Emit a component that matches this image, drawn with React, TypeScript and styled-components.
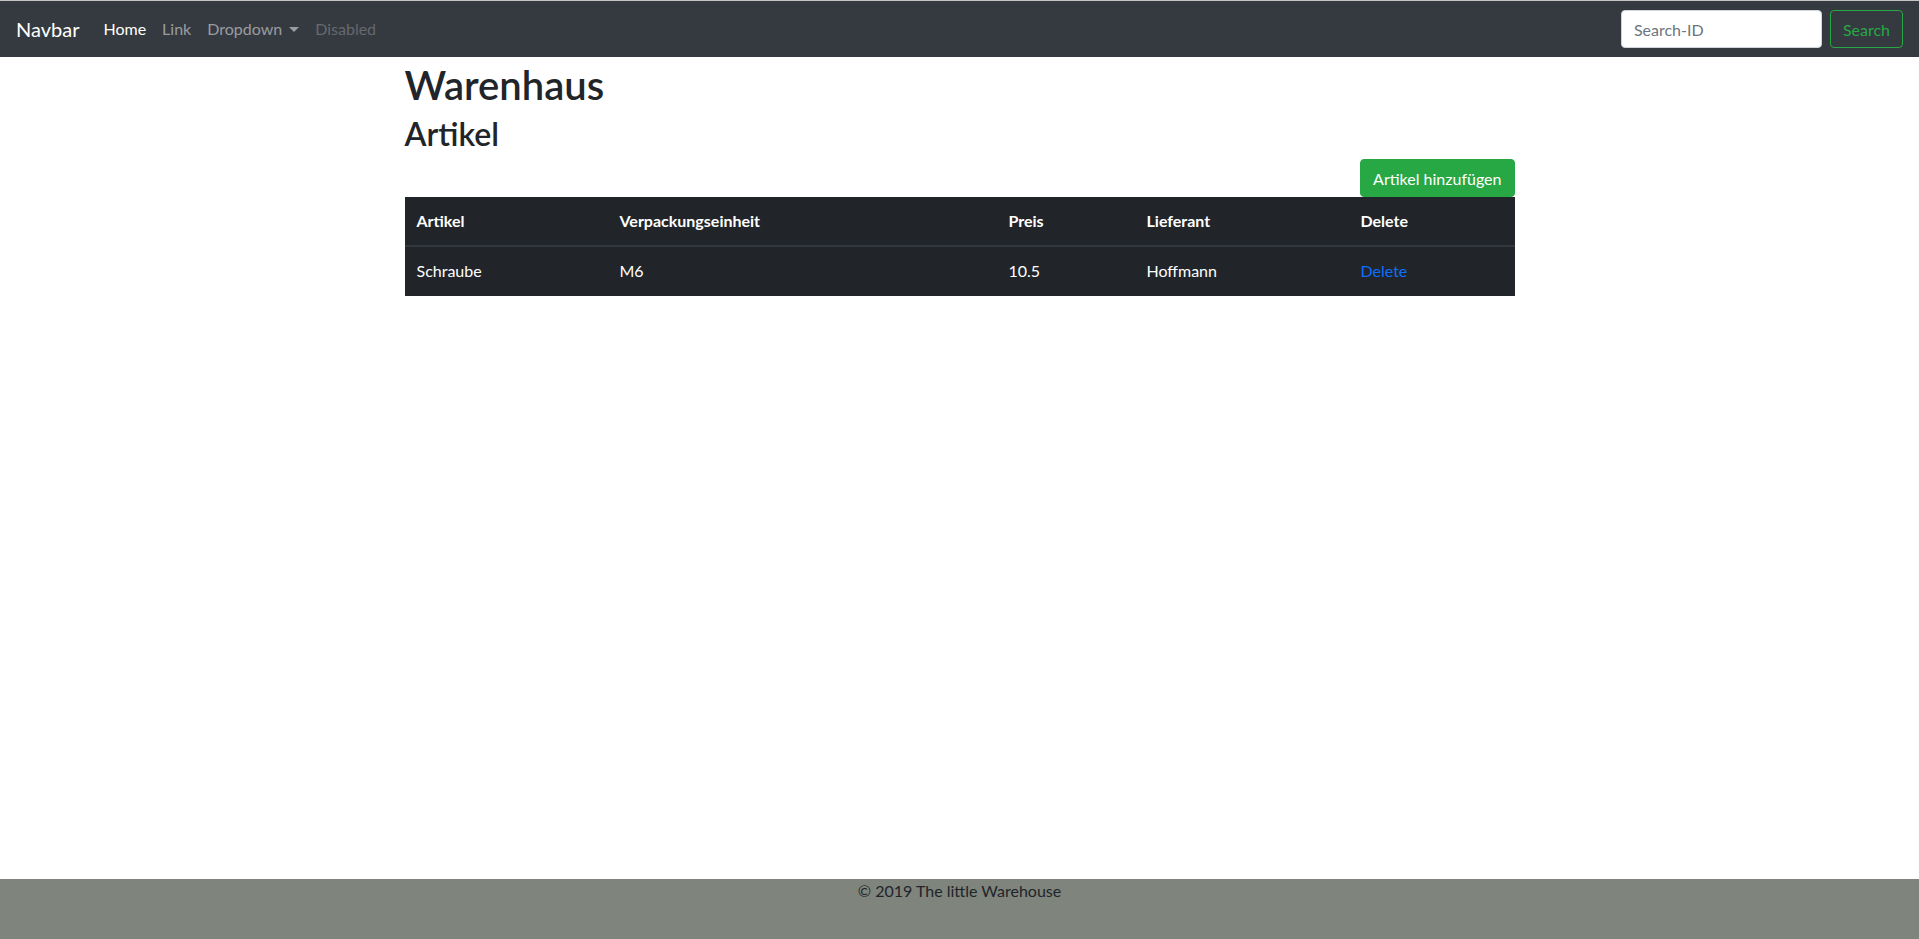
import React from "react";
import styled, { createGlobalStyle } from "styled-components";

const GlobalStyle = createGlobalStyle`
  *, *::before, *::after { box-sizing: border-box; }
  html, body { margin: 0; padding: 0; }
  body {
    font-family: "Lato", "Open Sans", "Noto Sans", sans-serif;
    font-size: 16px;
    line-height: 1.5;
    color: #212529;
    background: #fff;
  }
`;

const Page = styled.div`
  min-height: 100vh;
  display: flex;
  flex-direction: column;
  border-top: 1px solid #c4c4c4;
`;

const Navbar = styled.nav`
  height: 56px;
  background: #343a40;
  display: flex;
  align-items: center;
  padding: 8px 16px;
`;

const Brand = styled.a`
  font-size: 20px;
  line-height: 30px;
  color: #fff;
  margin-right: 16px;
  padding: 5px 0;
  text-decoration: none;
`;

const NavList = styled.ul`
  display: flex;
  list-style: none;
  margin: 0;
  padding: 0;
  flex: 1;
`;

const NavLink = styled.a<{ $tone: "active" | "normal" | "disabled" }>`
  display: flex;
  align-items: center;
  padding: 8px;
  color: ${(p) =>
    p.$tone === "active"
      ? "#fff"
      : p.$tone === "disabled"
      ? "rgba(255,255,255,0.25)"
      : "rgba(255,255,255,0.5)"};
  text-decoration: none;
`;

const Caret = styled.span`
  display: inline-block;
  margin-left: 7px;
  width: 0;
  height: 0;
  border-top: 5px solid rgba(255, 255, 255, 0.5);
  border-left: 5px solid transparent;
  border-right: 5px solid transparent;
  margin-top: 1px;
`;

const SearchForm = styled.form`
  display: flex;
  align-items: center;
  gap: 8px;
`;

const SearchInput = styled.input`
  width: 201px;
  height: 38px;
  padding: 6px 12px;
  font-family: inherit;
  font-size: 16px;
  color: #495057;
  border: 1px solid #ced4da;
  border-radius: 4px;
  background: #fff;
  &::placeholder { color: #6c757d; }
`;

const OutlineButton = styled.button`
  height: 38px;
  padding: 6px 12px;
  font-family: inherit;
  font-size: 16px;
  color: #28a745;
  background: transparent;
  border: 1px solid #28a745;
  border-radius: 4px;
`;

const Container = styled.main`
  width: 1140px;
  margin: 0 auto;
  padding: 0 15px;
`;

const H1 = styled.h1`
  font-size: 40px;
  font-weight: 600;
  line-height: 1.2;
  margin: 0 0 6px;
  padding-top: 4px;
`;

const H2 = styled.h2`
  font-size: 32px;
  font-weight: 600;
  line-height: 1.2;
  margin: 0 0 6px;
`;

const ActionRow = styled.div`
  display: flex;
  justify-content: flex-end;
`;

const SuccessButton = styled.button`
  height: 38px;
  padding: 6px 12px;
  font-family: inherit;
  font-size: 16px;
  color: #fff;
  background: #28a745;
  border: 1px solid #28a745;
  border-radius: 4px;
`;

const Table = styled.table`
  width: 100%;
  border-collapse: collapse;
  background: #212529;
  color: #fff;
  table-layout: fixed;
`;

const Th = styled.th<{ $w: number }>`
  width: ${(p) => p.$w}px;
  text-align: left;
  font-weight: 700;
  padding: 12px;
  border-bottom: 2px solid #32383e;
`;

const Td = styled.td`
  padding: 12px;
  border-bottom: 1px solid #212529;
`;

const DeleteLink = styled.a`
  color: #0d6efd;
  text-decoration: none;
`;

const Footer = styled.footer`
  margin-top: auto;
  height: 60px;
  background: #7f847d;
  text-align: center;
  color: #212529;
  line-height: 24px;
`;

const columns: [string, number][] = [
  ["Artikel", 203],
  ["Verpackungseinheit", 389],
  ["Preis", 138],
  ["Lieferant", 214],
  ["Delete", 166],
];

export default function App() {
  return (
    <>
      <GlobalStyle />
      <Page>
        <Navbar>
          <Brand href="#">Navbar</Brand>
          <NavList>
            <li><NavLink $tone="active" href="#">Home</NavLink></li>
            <li><NavLink $tone="normal" href="#">Link</NavLink></li>
            <li>
              <NavLink $tone="normal" href="#">
                Dropdown<Caret />
              </NavLink>
            </li>
            <li><NavLink $tone="disabled" href="#">Disabled</NavLink></li>
          </NavList>
          <SearchForm onSubmit={(e) => e.preventDefault()}>
            <SearchInput placeholder="Search-ID" />
            <OutlineButton type="submit">Search</OutlineButton>
          </SearchForm>
        </Navbar>
        <Container>
          <H1>Warenhaus</H1>
          <H2>Artikel</H2>
          <ActionRow>
            <SuccessButton>Artikel hinzufügen</SuccessButton>
          </ActionRow>
          <Table>
            <thead>
              <tr>
                {columns.map(([c, w]) => (
                  <Th key={c} $w={w}>{c}</Th>
                ))}
              </tr>
            </thead>
            <tbody>
              <tr>
                <Td>Schraube</Td>
                <Td>M6</Td>
                <Td>10.5</Td>
                <Td>Hoffmann</Td>
                <Td><DeleteLink href="#">Delete</DeleteLink></Td>
              </tr>
            </tbody>
          </Table>
        </Container>
        <Footer>© 2019 The little Warehouse</Footer>
      </Page>
    </>
  );
}
